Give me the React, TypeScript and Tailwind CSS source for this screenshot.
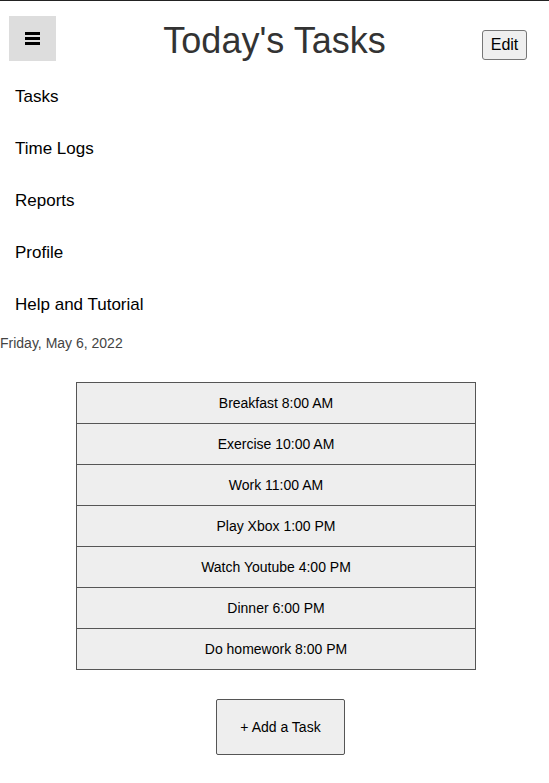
import React from "react"

const navItems = ["Tasks", "Time Logs", "Reports", "Profile", "Help and Tutorial"]

const tasks = [
  "Breakfast 8:00 AM",
  "Exercise 10:00 AM",
  "Work 11:00 AM",
  "Play Xbox 1:00 PM",
  "Watch Youtube 4:00 PM",
  "Dinner 6:00 PM",
  "Do homework 8:00 PM",
]

export default function App() {
  return (
    <div className="min-h-[783px] bg-white border-t border-[#222] font-['Liberation_Sans',Arial,sans-serif] text-black">
      {/* Header */}
      <div className="relative h-[73px]">
        <button className="absolute left-[9px] top-[15px] w-[47px] h-[45px] bg-[#ddd] flex flex-col items-center justify-center gap-[2px]">
          <span className="block w-[15px] h-[3px] bg-black" />
          <span className="block w-[15px] h-[3px] bg-black" />
          <span className="block w-[15px] h-[3px] bg-black" />
        </button>
        <h1 className="pt-[20px] text-center text-[36px] leading-[40px] text-[#333]">Today's Tasks</h1>
        <button className="absolute right-[22px] top-[29px] w-[45px] h-[30px] border border-[#767676] rounded-[3px] bg-[#efefef] text-[16px] leading-none">
          Edit
        </button>
      </div>

      {/* Nav */}
      <nav className="flex flex-col">
        {navItems.map((n) => (
          <div key={n} className="h-[52px] pl-[15px] pt-[13px] text-[17px] leading-[20px]">
            {n}
          </div>
        ))}
      </nav>

      {/* Date */}
      <div className="mt-[1px] text-[14px] leading-[16px] text-[#444]">Friday, May 6, 2022</div>

      {/* Task list */}
      <div className="mt-[31px] ml-[76px] w-[400px] border border-[#555] border-b-0">
        {tasks.map((t) => (
          <div key={t} className="h-[41px] border-b border-[#555] bg-[#eee] flex items-center justify-center text-[14px]">
            {t}
          </div>
        ))}
      </div>

      <div className="mt-[29px] ml-[216px]">
        <button className="w-[129px] h-[56px] border border-[#555] rounded-[2px] bg-[#eee] text-[14px]">
          + Add a Task
        </button>
      </div>
    </div>
  )
}
